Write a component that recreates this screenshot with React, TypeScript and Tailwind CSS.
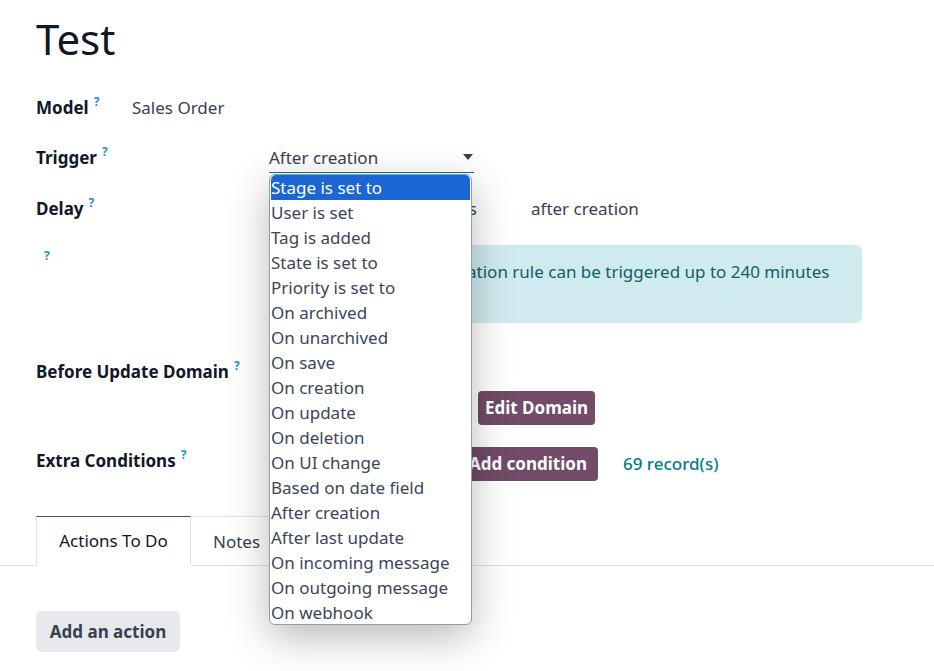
import React from 'react';

const triggers = [
  'Stage is set to',
  'User is set',
  'Tag is added',
  'State is set to',
  'Priority is set to',
  'On archived',
  'On unarchived',
  'On save',
  'On creation',
  'On update',
  'On deletion',
  'On UI change',
  'Based on date field',
  'After creation',
  'After last update',
  'On incoming message',
  'On outgoing message',
  'On webhook',
];

function Help() {
  return <sup className="ml-[5px] text-[12px] font-bold text-[#1f8dd6] top-[-8px]">?</sup>;
}

function Label({ text, className = '' }: { text: string; className?: string }) {
  return (
    <div className={`w-[233px] shrink-0 leading-[25px] font-bold text-[#111827] ${className}`}>
      {text}
      <Help />
    </div>
  );
}

export default function App() {
  return (
    <div className="relative w-[934px] h-[671px] overflow-hidden bg-white text-[17px] text-[#374151] font-['Noto_Sans',sans-serif]">
      <div className="pl-[36px]">
        <h1 className="mt-[18px] text-[42px] leading-[42px] text-[#111827]">Test</h1>

        <div className="mt-[35px] flex leading-[25px]">
          <div className="w-[96px] font-bold text-[#111827]">
            Model
            <Help />
          </div>
          <span>Sales Order</span>
        </div>

        {/* Trigger */}
        <div className="mt-[24px] flex">
          <Label text="Trigger" className="pt-px" />
          <div className="relative w-[205px] pt-px pb-[2px] border-b border-[#017e84] leading-[25px]">
            After creation
            <svg className="absolute right-[1px] top-[10px]" width="10" height="6" viewBox="0 0 10 6">
              <path d="M0 0h10L5 6z" fill="#374151" />
            </svg>
          </div>
        </div>

        {/* Delay */}
        <div className="mt-[23px] flex">
          <Label text="Delay" />
          <div className="flex leading-[25px]">
            <span className="w-[120px]" />
            <span className="w-[88px] text-right">Minutes</span>
            <span className="ml-[54px]">after creation</span>
          </div>
        </div>

        {/* Alert */}
        <div className="mt-[24px] flex">
          <Label text="" className="pt-[4px] pl-[3px]" />
          <div className="w-[593px] h-[78px] rounded-[6px] bg-[#d0ebef] px-[32px] py-[14px] leading-[25px] whitespace-nowrap text-[#135e66]">
            Note that this automation rule can be triggered up to 240 minutes
            <br />
            after its schedule.
          </div>
        </div>

        {/* Before Update Domain */}
        <div className="mt-[36px] flex">
          <Label text="Before Update Domain" />
          <div>
            <div className="h-[25px]" />
            <button className="mt-[7px] ml-[209px] w-[117px] h-[34px] rounded-[4px] bg-[#714b67] text-white font-bold whitespace-nowrap">
              Edit Domain
            </button>
          </div>
        </div>

        {/* Extra Conditions */}
        <div className="mt-[22px] flex items-start">
          <Label text="Extra Conditions" className="pt-[1px]" />
          <button className="ml-[170px] w-[159px] h-[34px] rounded-[4px] bg-[#714b67] text-white font-bold whitespace-nowrap flex items-center justify-end gap-[5px] px-[11px]">
            <svg width="10" height="10" viewBox="0 0 10 10">
              <path d="M4 0h2v4h4v2H6v4H4V6H0V4h4z" fill="white" />
            </svg>
            Add condition
          </button>
          <span className="ml-[25px] leading-[34px] font-medium text-[#017e84]">69 record(s)</span>
        </div>
      </div>

      {/* Tabs */}
      <div className="mt-[35px] pl-[36px] flex border-b border-[#dee2e6]">
        <div className="-mb-px h-[50px] w-[155px] flex items-center justify-center border border-[#dee2e6] border-t-[#5b4756] border-b-white bg-white text-[#111827]">
          Actions To Do
        </div>
        <div className="-mb-px h-[50px] w-[110px] flex items-center pl-[22px] border-t border-r border-[#dee2e6] border-b-0">
          Notes
        </div>
      </div>

      <div className="pl-[36px]">
        <button className="mt-[45px] w-[144px] h-[41px] rounded-[6px] bg-[#e7e9ed] font-bold text-[#374151]">
          Add an action
        </button>
      </div>

      {/* Native select popup */}
      <div className="absolute left-[269px] top-[174px] w-[203px] h-[451px] rounded-[6px] border border-[#9a9a9a] bg-white px-px shadow-[0_12px_40px_rgba(0,0,0,0.28)] overflow-hidden">
        {triggers.map((t, i) => (
          <div
            key={t}
            className={`h-[25px] leading-[25px] whitespace-nowrap ${i === 0 ? 'bg-[#1a66d4] text-white rounded-t-[5px]' : 'text-[#3a4658]'}`}
          >
            {t}
          </div>
        ))}
      </div>
    </div>
  );
}
